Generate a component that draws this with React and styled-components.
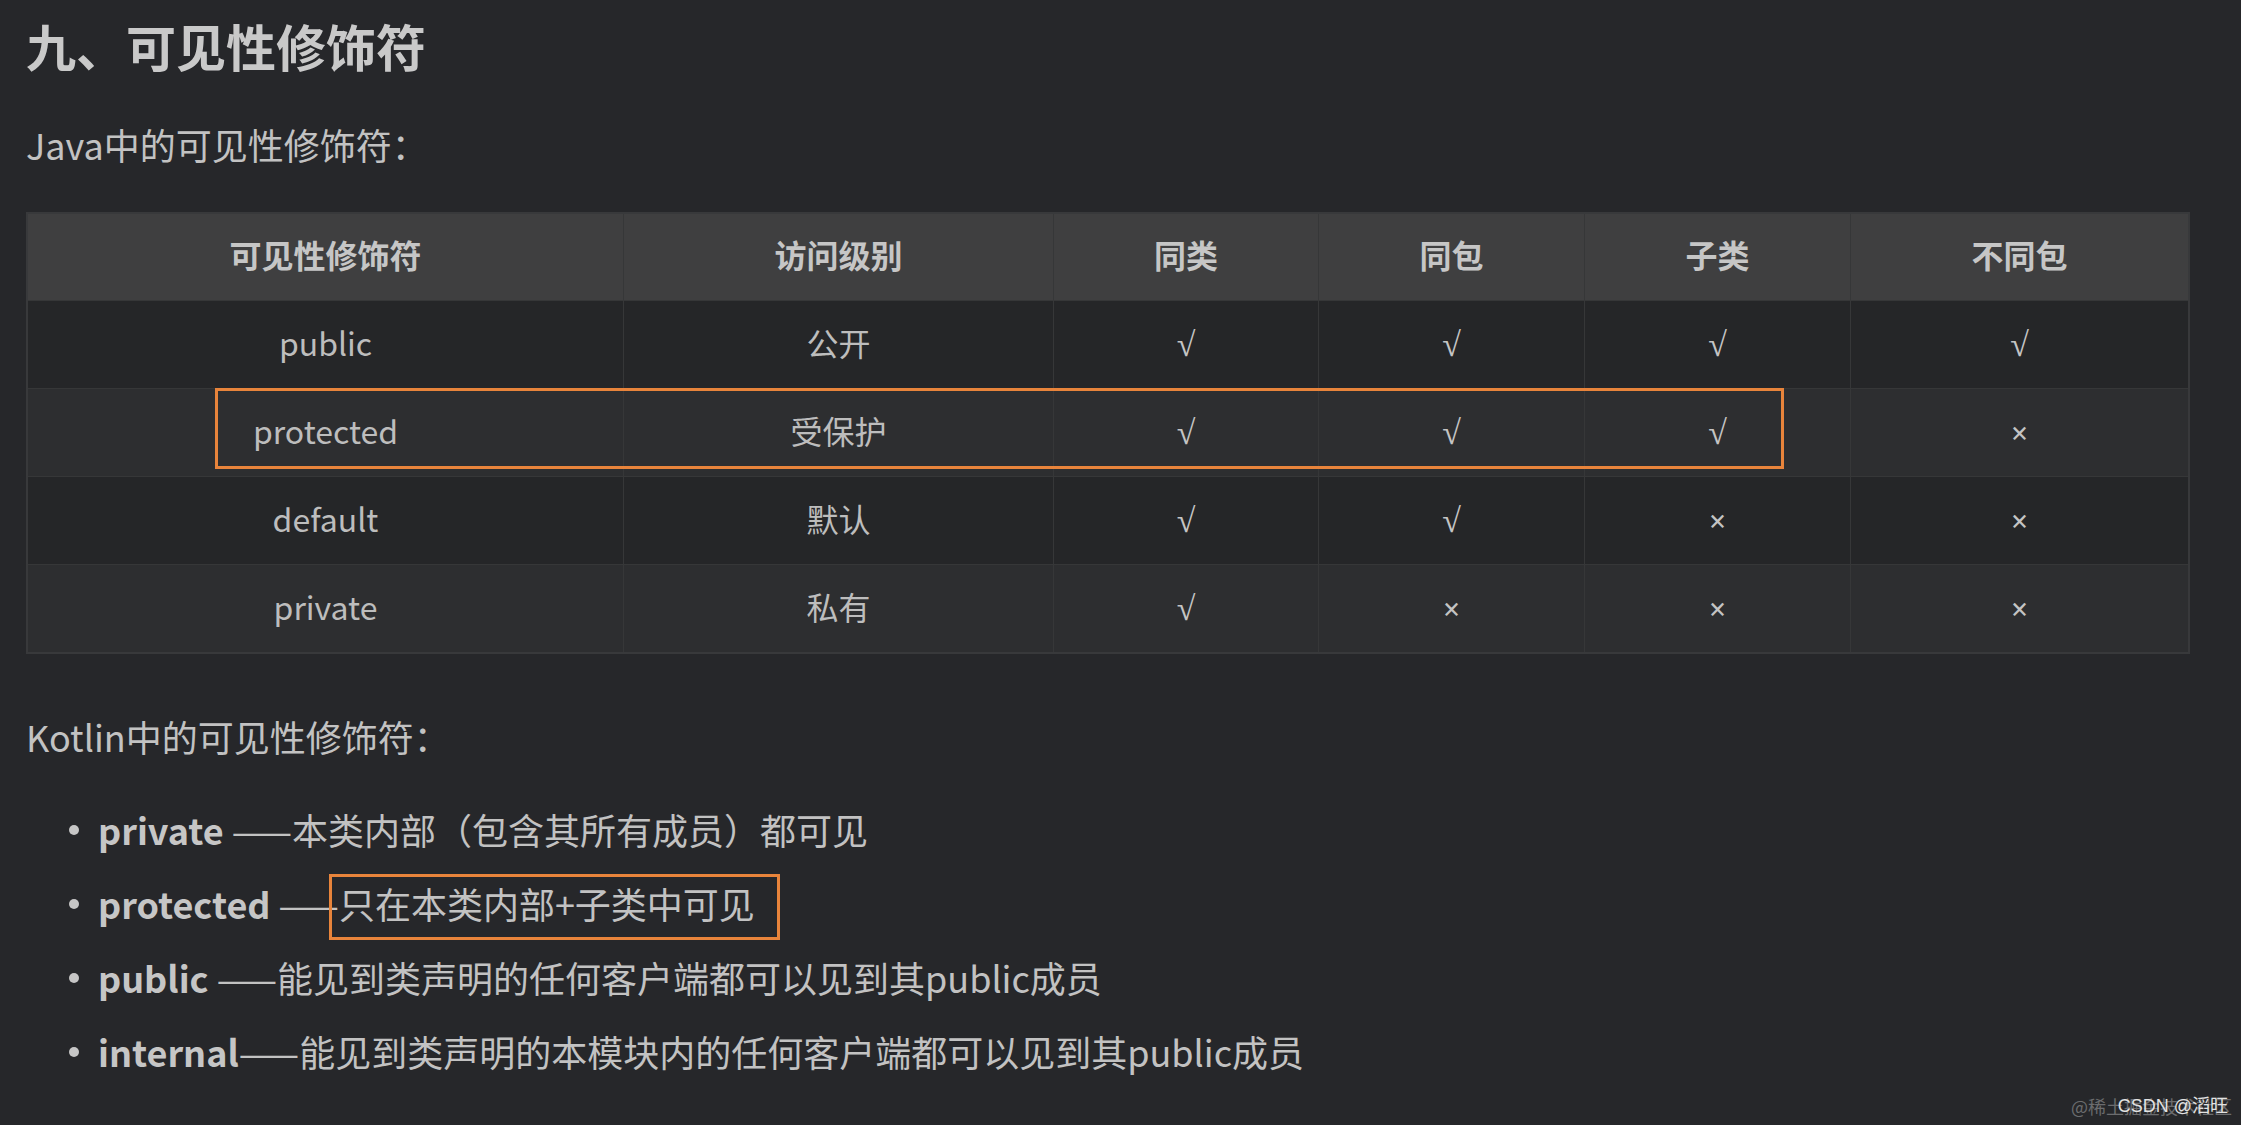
import React from 'react';
import styled, { createGlobalStyle } from 'styled-components';

const GlobalStyle = createGlobalStyle`
  html, body {
    margin: 0;
    padding: 0;
    background: #26272a;
  }
  body {
    font-family: "Noto Sans CJK SC", "Noto Sans", sans-serif;
    color: #c2c2c2;
  }
`;

const Page = styled.div`
  position: relative;
  min-height: 100vh;
  box-sizing: border-box;
  padding: 15px 0 0 26px;
  background: #26272a;
`;

const Title = styled.h1`
  margin: 0;
  font-size: 50px;
  line-height: 60px;
  font-weight: 700;
  color: #c9c9c9;
`;

const Subtitle = styled.p`
  margin: ${(p) => p.$top}px 0 0;
  font-size: 36px;
  line-height: 50px;
  color: #c2c2c2;
`;

const TableWrap = styled.div`
  position: relative;
  width: 2164px;
  margin-top: 43px;
`;

const Table = styled.table`
  width: 100%;
  border-collapse: collapse;
  table-layout: fixed;
  border: 2px solid #38393b;
`;

const HeadCell = styled.th`
  width: ${(p) => (p.$w ? `${p.$w}px` : 'auto')};
  height: 80px;
  padding: 0 0 6px;
  background: #3f3f40;
  border: 1px solid #363738;
  font-size: 32px;
  font-weight: 700;
  color: #c6c6c6;
  text-align: center;
  vertical-align: middle;
`;

const Row = styled.tr`
  background: ${(p) => (p.$alt ? '#2d2e30' : '#252628')};
`;

const Cell = styled.td`
  height: 81px;
  padding: 0 0 6px;
  border: 1px solid #363738;
  font-size: 32px;
  color: #bdbdbd;
  text-align: center;
  vertical-align: middle;
`;

const Mark = styled.span`
  font-family: "Liberation Serif", "DejaVu Serif", serif;
  font-size: ${(p) => (p.$cross ? 31 : 34)}px;
  font-weight: ${(p) => (p.$cross ? 700 : 400)};
  color: #c4c4c4;
`;

const RowHighlight = styled.div`
  position: absolute;
  left: 189px;
  top: 176px;
  width: 1569px;
  height: 81px;
  box-sizing: border-box;
  border: 3px solid #e8843b;
  pointer-events: none;
`;

const List = styled.ul`
  list-style: none;
  margin: 31px 0 0;
  padding: 0;
`;

const Item = styled.li`
  position: relative;
  padding-left: 72px;
  font-size: 36px;
  line-height: 74px;
  color: #c2c2c2;
  white-space: nowrap;

  &::before {
    content: '';
    position: absolute;
    left: 43px;
    top: 33px;
    width: 10px;
    height: 10px;
    border-radius: 50%;
    background: #c6c6c6;
  }
`;

const Key = styled.strong`
  font-weight: 700;
  color: #c6c6c6;
`;

const Boxed = styled.span`
  position: relative;

  &::after {
    content: '';
    position: absolute;
    left: -10px;
    right: -25px;
    top: -3px;
    bottom: -11px;
    border: 3px solid #e8843b;
    pointer-events: none;
  }
`;

const Watermark = styled.div`
  position: absolute;
  right: 9px;
  bottom: 8px;
  font-size: 18px;
  line-height: 22px;
  color: #6b6c6e;
  white-space: nowrap;
`;

const WatermarkTop = styled.span`
  position: absolute;
  right: 4px;
  top: 0;
  color: #e2e2e2;
  font-family: "Liberation Sans", "Noto Sans CJK SC", sans-serif;
`;

const columns = [
  { name: '可见性修饰符', w: 595 },
  { name: '访问级别', w: 429 },
  { name: '同类', w: 264 },
  { name: '同包', w: 265 },
  { name: '子类', w: 265 },
  { name: '不同包' },
];

const rows = [
  { mod: 'public', level: '公开', access: [1, 1, 1, 1] },
  { mod: 'protected', level: '受保护', access: [1, 1, 1, 0] },
  { mod: 'default', level: '默认', access: [1, 1, 0, 0] },
  { mod: 'private', level: '私有', access: [1, 0, 0, 0] },
];

export default function App() {
  return (
    <>
      <GlobalStyle />
      <Page>
        <Title>九、可见性修饰符</Title>
        <Subtitle $top={44}>Java中的可见性修饰符：</Subtitle>

        <TableWrap>
          <Table>
            <thead>
              <tr>
                {columns.map((c) => (
                  <HeadCell key={c.name} $w={c.w}>{c.name}</HeadCell>
                ))}
              </tr>
            </thead>
            <tbody>
              {rows.map((r, i) => (
                <Row key={r.mod} $alt={i % 2 === 1}>
                  <Cell>{r.mod}</Cell>
                  <Cell>{r.level}</Cell>
                  {r.access.map((ok, j) => (
                    <Cell key={j}>
                      {ok ? <Mark>√</Mark> : <Mark $cross>×</Mark>}
                    </Cell>
                  ))}
                </Row>
              ))}
            </tbody>
          </Table>
          <RowHighlight />
        </TableWrap>

        <Subtitle $top={57}>Kotlin中的可见性修饰符：</Subtitle>

        <List>
          <Item><Key>private</Key> ——本类内部（包含其所有成员）都可见</Item>
          <Item><Key>protected</Key> ——<Boxed>只在本类内部+子类中可见</Boxed></Item>
          <Item><Key>public</Key> ——能见到类声明的任何客户端都可以见到其public成员</Item>
          <Item><Key>internal</Key>——能见到类声明的本模块内的任何客户端都可以见到其public成员</Item>
        </List>

        <Watermark>
          @稀土掘金技术社区
          <WatermarkTop>CSDN @滔旺</WatermarkTop>
        </Watermark>
      </Page>
    </>
  );
}
